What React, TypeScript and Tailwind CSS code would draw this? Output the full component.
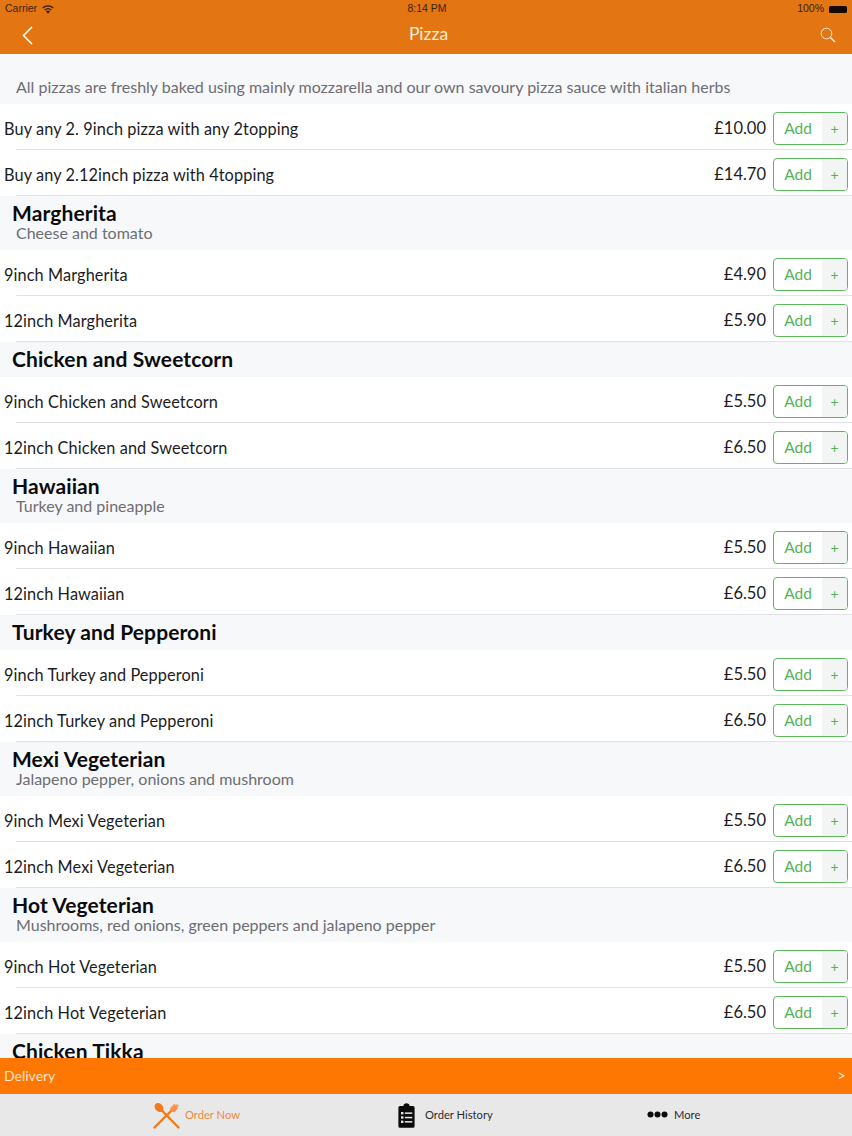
import React from "react";

type Item = { name: string; price: string };
type Section = { title?: string; desc?: string; items: Item[] };

const sections: Section[] = [
  { items: [
    { name: "Buy any 2. 9inch pizza with any 2topping", price: "£10.00" },
    { name: "Buy any 2.12inch pizza with 4topping", price: "£14.70" },
  ] },
  { title: "Margherita", desc: "Cheese and tomato", items: [
    { name: "9inch Margherita", price: "£4.90" },
    { name: "12inch Margherita", price: "£5.90" },
  ] },
  { title: "Chicken and Sweetcorn", items: [
    { name: "9inch Chicken and Sweetcorn", price: "£5.50" },
    { name: "12inch Chicken and Sweetcorn", price: "£6.50" },
  ] },
  { title: "Hawaiian", desc: "Turkey and pineapple", items: [
    { name: "9inch Hawaiian", price: "£5.50" },
    { name: "12inch Hawaiian", price: "£6.50" },
  ] },
  { title: "Turkey and Pepperoni", items: [
    { name: "9inch Turkey and Pepperoni", price: "£5.50" },
    { name: "12inch Turkey and Pepperoni", price: "£6.50" },
  ] },
  { title: "Mexi Vegeterian", desc: "Jalapeno pepper, onions and mushroom", items: [
    { name: "9inch Mexi Vegeterian", price: "£5.50" },
    { name: "12inch Mexi Vegeterian", price: "£6.50" },
  ] },
  { title: "Hot Vegeterian", desc: "Mushrooms, red onions, green peppers and jalapeno pepper", items: [
    { name: "9inch Hot Vegeterian", price: "£5.50" },
    { name: "12inch Hot Vegeterian", price: "£6.50" },
  ] },
];

function Row({ item }: { item: Item }) {
  return (
    <div className="relative h-[46px] bg-white flex items-center pl-1 pr-1 pt-[2px]">
      <span className="flex-1 text-[16.3px] text-[#1c1c1e] tracking-[0.1px] pt-[2px]">{item.name}</span>
      <span className="text-[16.5px] text-[#1c1c1e] mr-[7px] pt-[1px]">{item.price}</span>
      <div className="w-[75px] h-[33px] rounded-[4px] border border-[#5cb85c] flex overflow-hidden">
        <span className="flex-1 flex items-center justify-center pt-[2px] text-[15.5px] text-[#53b253]">Add</span>
        <span className="w-[25px] bg-[#f3f5f4] flex items-center justify-center pt-[1px] text-[14px] text-[#53b253]">+</span>
      </div>
      <div className="absolute left-4 right-0 bottom-0 h-px bg-[#e2e2e6]" />
    </div>
  );
}

function ForkSpoon() {
  return (
    <svg width="27" height="27" viewBox="0 0 27 27" fill="none">
      <path d="M25.500 25.500 L8 7.500" stroke="#ee7b1f" strokeWidth="2.400" strokeLinecap="round" />
      <ellipse cx="6" cy="5.500" rx="5" ry="3.800" transform="rotate(45 6 5.500)" fill="#ee7b1f" />
      <path d="M1.500 25.500 L18.500 8.500" stroke="#ee7b1f" strokeWidth="2.400" strokeLinecap="round" />
      <path d="M17.500 7 L21.500 2.500 M19.500 9 L25 3.500 M18.500 8 L23.500 3" stroke="#f39a55" strokeWidth="1.500" strokeLinecap="round" />
      <path d="M18 8.500 L21.500 10.500 L25 6 L21 3.500Z" fill="#f0914a" />
    </svg>
  );
}

function Clipboard() {
  return (
    <svg width="17" height="25" viewBox="0 0 17 25">
      <path d="M2 3h3.500V2.600C5.500 1.200 7 .3 8.500 .3s3 .9 3 2.300V3H15a1.600 1.600 0 0 1 1.600 1.600v18.600A1.600 1.600 0 0 1 15 24.800H2A1.600 1.600 0 0 1 .4 23.200V4.600A1.600 1.600 0 0 1 2 3Z" fill="#0b0b0b" />
      <g fill="#e9e8e9">
        <rect x="3" y="9" width="2.400" height="2.400" />
        <rect x="6.800" y="9.400" width="7.500" height="1.500" />
        <rect x="3" y="13.300" width="2.400" height="2.400" />
        <rect x="6.800" y="13.800" width="7.500" height="1.500" />
        <rect x="3" y="17.600" width="2.400" height="2.400" />
        <rect x="6.800" y="18.100" width="7.500" height="1.500" />
      </g>
    </svg>
  );
}

export default function App() {
  return (
    <div className="w-[852px] h-[1136px] flex flex-col overflow-hidden bg-[#f7f8fa] font-['Lato','Liberation_Sans',sans-serif]">
      <header className="h-[54px] shrink-0 bg-[#e37612] relative flex flex-col">
        <div className="h-[18px] shrink-0 relative flex items-center justify-between pl-[5px] pr-[5px] text-[10.500px] text-[#3a2408] font-['Liberation_Sans',sans-serif]">
          <div className="flex items-center gap-[5px]">
            <span>Carrier</span>
            <svg width="12" height="9" viewBox="0 0 12 9" fill="none">
              <path d="M6 8.800 L3.900 6.300 C5.100 5.300 6.900 5.300 8.100 6.300Z" fill="#2d1c06" />
              <path d="M2.800 4.900 C4.600 3.400 7.400 3.400 9.200 4.900" stroke="#2d1c06" strokeWidth="1.300" />
              <path d="M.7 2.900 C3.700 .2 8.300 .2 11.300 2.900" stroke="#2d1c06" strokeWidth="1.300" />
            </svg>
          </div>
          <span className="absolute left-[2px] right-0 text-center font-medium">8:14 PM</span>
          <div className="flex items-center gap-[3px]">
            <span className="mr-[2px]">100%</span>
            <div className="w-[18px] h-[7px] rounded-[1.500px] bg-[#120a02]" />
          </div>
        </div>
        <div className="flex-1 relative flex items-center justify-between pl-[22px] pr-[16px] pb-[2px]">
          <svg width="11" height="19" viewBox="0 0 11 19" fill="none">
            <path d="M10 1 L1.500 9.500 L10 18" stroke="#fff" strokeWidth="1.600" />
          </svg>
          <span className="absolute left-[5px] right-0 text-center text-[17.500px] text-[#fdeedd] pb-[2px]">Pizza</span>
          <svg width="16" height="16" viewBox="0 0 16 16" fill="none">
            <circle cx="6.500" cy="6.500" r="5.300" stroke="#fdeedd" strokeWidth="1" />
            <path d="M10.500 10.500 L15 15" stroke="#fdeedd" strokeWidth="1.500" />
          </svg>
        </div>
      </header>

      <main className="flex-1 overflow-hidden">
        <div className="h-[50px] flex items-end pl-4 pb-[5px] text-[16px] text-[#6d6d72]">
          All pizzas are freshly baked using mainly mozzarella and our own savoury pizza sauce with italian herbs
        </div>
        {sections.map((s, i) => (
          <div key={i}>
            {s.title && (
              <div className={`${s.desc ? "h-[54px]" : "h-[35px]"} px-3 pt-[5px]`}>
                <div className="text-[21px] leading-[23px] font-bold tracking-[0.1px] text-[#0b0b0d]">{s.title}</div>
                {s.desc && <div className="pl-1 text-[16px] leading-[17px] text-[#6d6d72]">{s.desc}</div>}
              </div>
            )}
            {s.items.map((it) => (
              <Row key={it.name} item={it} />
            ))}
          </div>
        ))}
        <div className="px-3 pt-[5px] text-[21px] leading-[23px] font-bold tracking-[0.1px] text-[#0b0b0d]">Chicken Tikka</div>
      </main>

      <div className="h-[36px] shrink-0 bg-[#fd7702] flex items-center justify-between px-1 pb-[1px] text-[14px] text-[#fde6cd]">
        <span>Delivery</span>
        <span className="text-[15px] mr-[2px]">&gt;</span>
      </div>
      <nav className="h-[42px] shrink-0 bg-[#e9e8e9] flex items-center pl-[153px] text-[11.200px]">
        <div className="w-[245px] flex items-center gap-[5px]">
          <ForkSpoon />
          <span className="text-[#ee8a3c] pt-[1px]">Order Now</span>
        </div>
        <div className="w-[249px] flex items-center gap-[10px] text-[#2c2c2e]">
          <Clipboard />
          <span className="pt-[1px]">Order History</span>
        </div>
        <div className="flex items-center gap-[6px] text-[#2c2c2e]">
          <svg width="21" height="7" viewBox="0 0 21 7">
            <circle cx="3.500" cy="3.500" r="3" fill="#0b0b0b" />
            <circle cx="10.500" cy="3.500" r="3" fill="#0b0b0b" />
            <circle cx="17.500" cy="3.500" r="3" fill="#0b0b0b" />
          </svg>
          <span className="pt-[1px]">More</span>
        </div>
      </nav>
    </div>
  );
}
